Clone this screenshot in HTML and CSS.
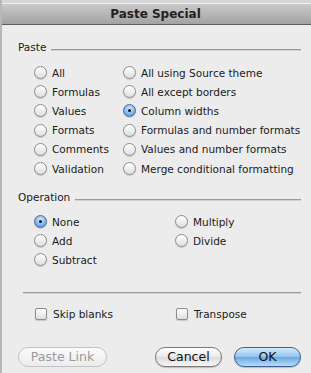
FILE: index.html
```html
<!DOCTYPE html>
<html>
<head>
 <link rel="stylesheet" href="styles.css">
</head>
<body>
<div class="window">
  <div class="strip"></div>
  <div class="titlebar">Paste Special</div>
  <div class="content">
    <div class="heading"><span>Paste</span><div class="rule"></div></div>
    <div class="pastegrid">
      <div class="opt"><span class="radio"></span>All</div>
      <div class="opt"><span class="radio"></span>All using Source theme</div>
      <div class="opt"><span class="radio"></span>Formulas</div>
      <div class="opt"><span class="radio"></span>All except borders</div>
      <div class="opt"><span class="radio"></span>Values</div>
      <div class="opt"><span class="radio on"></span>Column widths</div>
      <div class="opt"><span class="radio"></span>Formats</div>
      <div class="opt"><span class="radio"></span>Formulas and number formats</div>
      <div class="opt"><span class="radio"></span>Comments</div>
      <div class="opt"><span class="radio"></span>Values and number formats</div>
      <div class="opt"><span class="radio"></span>Validation</div>
      <div class="opt"><span class="radio"></span>Merge conditional formatting</div>
    </div>
    <div class="heading op"><span>Operation</span><div class="rule"></div></div>
    <div class="opgrid">
      <div class="opt"><span class="radio on"></span>None</div>
      <div class="opt"><span class="radio"></span>Multiply</div>
      <div class="opt"><span class="radio"></span>Add</div>
      <div class="opt"><span class="radio"></span>Divide</div>
      <div class="opt"><span class="radio"></span>Subtract</div>
    </div>
    <div class="sep"></div>
    <div class="checkrow">
      <div class="opt"><span class="check"></span>Skip blanks</div>
      <div class="opt"><span class="check"></span>Transpose</div>
    </div>
    <div class="buttons">
      <button class="btn disabled">Paste Link</button>
      <div class="spacer"></div>
      <button class="btn">Cancel</button>
      <button class="btn default">OK</button>
    </div>
  </div>
</div>
</body>
</html>
```

FILE: styles.css
```css
html, body {
  margin: 0;
  padding: 0;
}
body {
  background: #ececec;
  font-family: "Lucida Grande", "DejaVu Sans", sans-serif;
  font-size: 10.5px;
  color: #1a1a1a;
}
.window {
  width: 311px;
  height: 373px;
  border-left: 2px solid #b8b8b8;
  box-sizing: border-box;
  display: flex;
  flex-direction: column;
}
.strip {
  height: 3px;
  background: #d6d6d6;
  border-bottom: 1px solid #ededed;
}
.titlebar {
  height: 20px;
  line-height: 20px;
  text-align: center;
  font-weight: bold;
  font-size: 12px;
  color: #222;
  background: linear-gradient(#c9c9c9, #a3a3a3);
  border-bottom: 1px solid #5e5e5e;
  padding-right: 2px;
}
.content {
  padding: 14px 10px 0 16px;
}
.heading {
  display: flex;
  align-items: center;
  height: 16px;
}
.heading .rule {
  flex: 1;
  margin-left: 5px;
  margin-top: 5px;
  border-top: 1px solid #9a9a9a;
  border-bottom: 1px solid #d2d2d2;
}
.pastegrid {
  display: grid;
  grid-template-columns: 89px 1fr;
  grid-auto-rows: 19.2px;
  margin-top: 8px;
  padding-left: 16px;
}
.opgrid {
  display: grid;
  grid-template-columns: 141px 1fr;
  grid-auto-rows: 19px;
  margin-top: 7px;
  padding-left: 16px;
}
.heading.op {
  margin-top: 11px;
}
.opt {
  display: flex;
  align-items: center;
  white-space: nowrap;
}
.radio {
  width: 11px;
  height: 11px;
  border-radius: 50%;
  border: 1px solid #8c8c8c;
  background: linear-gradient(#ffffff, #dedede);
  margin-right: 5px;
  flex: none;
  position: relative;
  box-shadow: 0 1px 1px rgba(0,0,0,0.15);
}
.radio.on {
  border-color: #4a6a9a;
  background: radial-gradient(circle at 50% 35%, #d8ecff, #6aa6e6 70%, #3a78c8);
}
.radio.on::after {
  content: "";
  position: absolute;
  left: 4px;
  top: 4px;
  width: 3px;
  height: 3px;
  border-radius: 50%;
  background: #111;
}
.sep {
  margin: 23px 0 0 5px;
  border-top: 1px solid #9a9a9a;
  border-bottom: 1px solid #d2d2d2;
}
.checkrow {
  display: grid;
  grid-template-columns: 141px 1fr;
  height: 19px;
  margin-top: 10px;
  padding-left: 17px;
}
.check {
  width: 10px;
  height: 10px;
  border: 1px solid #8c8c8c;
  border-radius: 2px;
  background: linear-gradient(#ffffff, #dedede);
  margin-right: 6px;
  flex: none;
  box-shadow: 0 1px 1px rgba(0,0,0,0.15);
}
.buttons {
  display: flex;
  align-items: center;
  margin-top: 24px;
  gap: 12px;
}
.spacer {
  flex: 1;
}
.btn {
  font-family: inherit;
  font-size: 12.5px;
  height: 20px;
  line-height: 16px;
  padding: 0;
  border: 1px solid #7a7a7a;
  border-radius: 10px;
  background: linear-gradient(#ffffff, #e9e9e9 50%, #dcdcdc 51%, #f6f6f6);
  color: #111;
  width: 67px;
  box-shadow: 0 1px 1px rgba(0,0,0,0.2);
}
.btn.disabled {
  width: 89px;
  color: #9a9a9a;
  border-color: #c4c4c4;
  margin-left: 0;
  box-shadow: none;
  background: linear-gradient(#fbfbfb, #ececec);
}
.btn.default {
  border-color: #3d5f8f;
  background: linear-gradient(#d6eafc, #91c3ef 50%, #6aa8e4 51%, #b9dcfb);
}
```
